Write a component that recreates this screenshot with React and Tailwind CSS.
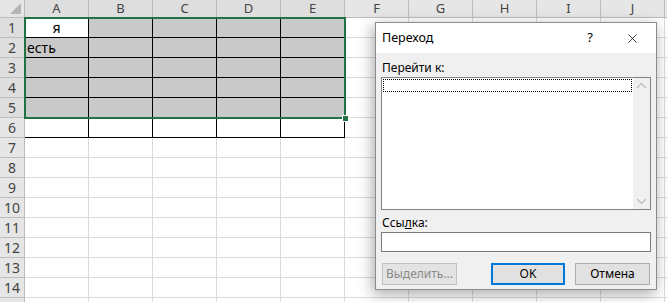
import { X } from "lucide-react";

const cols = ["A", "B", "C", "D", "E", "F", "G", "H", "I", "J"];
const rows = [1, 2, 3, 4, 5, 6, 7, 8, 9, 10, 11, 12, 13, 14, 15];

function Cell({ r, c }) {
  const inTable = r <= 6 && c <= 4;
  let cls = "border-r border-b border-[#dadada] bg-white";
  if (inTable) {
    cls = "border-r border-b border-black bg-white";
    if (r <= 5 && !(r === 1 && c === 0)) cls = "border-r border-b border-black bg-[#c9c9c9]";
  }
  let text = null;
  if (r === 1 && c === 0) text = <div className="w-full text-center leading-[19px]">я</div>;
  if (r === 2 && c === 0) text = <div className="pl-[2px] leading-[19px]">есть</div>;
  return <div className={cls + " text-[14px] text-black"}>{text}</div>;
}

export default function App() {
  return (
    <div className="relative w-[667px] h-[302px] overflow-hidden bg-white font-['Noto_Sans','Open_Sans',sans-serif]">
      <div className="grid grid-cols-[25px_repeat(10,64px)_1fr] grid-rows-[18px_repeat(15,20px)]">
        <div className="relative bg-[#e6e6e6] border-r border-b border-[#bdbdbd]">
          <div className="absolute right-[3px] bottom-[3px] w-0 h-0 border-l-[11px] border-l-transparent border-b-[11px] border-b-[#b4b4b4]"></div>
        </div>
        {cols.map((c, i) => (
          <div
            key={c}
            className={
              i <= 4
                ? "flex items-center justify-center bg-[#dedede] border-r border-b border-[#bdbdbd] text-[13px] text-[#444]"
                : "flex items-center justify-center bg-[#e6e6e6] border-r border-b border-[#bdbdbd] text-[13px] text-[#444]"
            }
          >
            {c}
          </div>
        ))}
        <div className="bg-[#e6e6e6] border-b border-[#bdbdbd]"></div>
        {rows.map((r) => (
          <div key={r} className="contents">
            <div
              className={
                r <= 5
                  ? "flex items-center justify-center bg-[#dedede] border-r border-b border-[#bdbdbd] text-[14px] text-[#444]"
                  : "flex items-center justify-center bg-[#e6e6e6] border-r border-b border-[#bdbdbd] text-[14px] text-[#444]"
              }
            >
              {r < 15 ? r : ""}
            </div>
            {cols.map((c, i) => (
              <Cell key={c} r={r} c={i} />
            ))}
            <div className="border-b border-[#dadada]"></div>
          </div>
        ))}
      </div>

      {/* selection frame + fill handle */}
      <div className="absolute left-[24px] top-[17px] w-[322px] h-[102px] border-2 border-[#217346]"></div>
      <div className="absolute left-[342px] top-[115px] w-[7px] h-[7px] bg-[#217346] border border-white"></div>

      {/* Go To dialog */}
      <div className="absolute left-[375px] top-[22px] w-[282px] h-[268px] bg-[#f0f0f0] border border-[#8c8c8c] shadow-[-2px_4px_14px_rgba(0,0,0,0.35)] text-[12px] text-black">
        <div className="flex items-center h-[30px] bg-white pl-[6px]">
          <span className="flex-1 text-[12.5px]">Переход</span>
          <span className="w-[20px] text-center text-[13px] mr-[25px]">?</span>
          <X className="w-[15px] h-[15px] mr-[16px]" strokeWidth={1.2} />
        </div>
        <div className="px-[5px]">
          <div className="mt-[6px] h-[18px] leading-[18px] pl-[1px]">Перейти к:</div>
          <div className="flex h-[133px] bg-white border border-[#828282]">
            <div className="flex-1 pt-[1px] pl-[1px] pr-[1px]">
              <div className="h-[13px] border border-dotted border-black"></div>
            </div>
            <div className="flex flex-col justify-between items-center w-[17px] bg-[#f0f0f0] py-[4px]">
              <svg width="11" height="7" viewBox="0 0 11 7">
                <path d="M1 6 L5.5 1.5 L10 6" fill="none" stroke="#c2c2c2" strokeWidth="1.5" />
              </svg>
              <svg width="11" height="7" viewBox="0 0 11 7">
                <path d="M1 1 L5.5 5.5 L10 1" fill="none" stroke="#c2c2c2" strokeWidth="1.5" />
              </svg>
            </div>
          </div>
          <div className="mt-[4px] h-[18px] leading-[18px] pl-[1px]">
            Ссы<span className="underline">л</span>ка:
          </div>
          <div className="h-[20px] bg-white border border-[#7a7a7a]"></div>
          <div className="flex mt-[11px] h-[22px]">
            <button className="w-[75px] ml-[1px] bg-[#e3e3e3] border border-[#c2c2c2] text-[#8a8a8a]">Выделить...</button>
            <button className="w-[74px] ml-[34px] bg-[#e1e1e1] border-2 border-[#0078d7]">OK</button>
            <button className="w-[75px] ml-[10px] bg-[#e1e1e1] border border-[#adadad]">Отмена</button>
          </div>
        </div>
      </div>
    </div>
  );
}
